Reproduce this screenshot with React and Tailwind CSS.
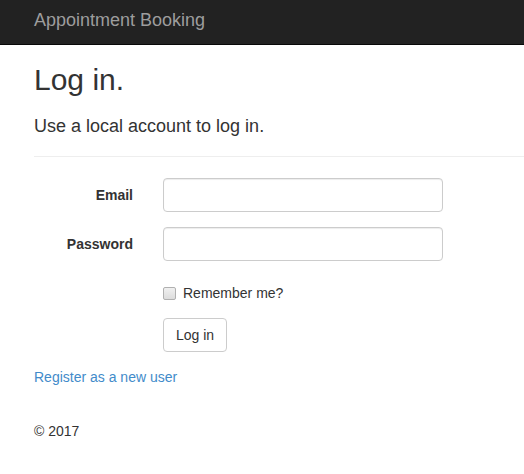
import React, { useState } from "react";

// Login page: dark navbar, heading block, horizontal form, footer
export default function App() {
  const [email, setEmail] = useState("");
  const [password, setPassword] = useState("");
  const [remember, setRemember] = useState(false);

  const inputClass =
    "w-[280px] h-[34px] px-3 border border-[#ccc] rounded-[4px] bg-white text-[14px] text-[#555] shadow-[inset_0_1px_1px_rgba(0,0,0,0.075)] focus:outline-none";

  return (
    <div className="min-h-screen bg-white font-['Liberation_Sans',Arial,sans-serif] text-[14px] leading-[20px] text-[#333]">
      {/* Navbar */}
      <nav className="h-[45px] bg-[#222] border-b border-[#080808] px-[34px] pt-[10px]">
        <a href="#" className="text-[18px] leading-[20px] text-[#9d9d9d]">
          Appointment Booking
        </a>
      </nav>

      <div className="px-[34px] overflow-hidden">
        <h2 className="mt-[18px] text-[30px] leading-[33px] font-normal">Log in.</h2>
        <h4 className="mt-[20px] text-[18px] leading-[20px] font-normal">
          Use a local account to log in.
        </h4>
        <hr className="mt-[20px] mr-[-34px] border-0 border-t border-[#eee]" />

        {/* Form */}
        <form className="mt-[21px]" onSubmit={e => e.preventDefault()}>
          <div className="flex items-center">
            <label className="w-[99px] text-right font-bold">Email</label>
            <input
              type="email"
              className={`ml-[30px] ${inputClass}`}
              value={email}
              onChange={e => setEmail(e.target.value)}
            />
          </div>
          <div className="flex items-center mt-[15px]">
            <label className="w-[99px] text-right font-bold">Password</label>
            <input
              type="password"
              className={`ml-[30px] ${inputClass}`}
              value={password}
              onChange={e => setPassword(e.target.value)}
            />
          </div>
          <div className="flex items-center mt-[22px] ml-[129px] h-[20px]">
            <input
              type="checkbox"
              className="appearance-none m-0 w-[13px] h-[13px] rounded-[2px] border border-[#b0b0b0] bg-gradient-to-b from-[#f0f0f0] to-[#dcdcdc] checked:bg-[#428bca]"
              checked={remember}
              onChange={e => setRemember(e.target.checked)}
            />
            <span className="ml-[7px]">Remember me?</span>
          </div>
          <div className="mt-[15px] ml-[129px]">
            <button
              type="submit"
              className="h-[34px] px-[12px] border border-[#ccc] rounded-[4px] bg-white text-[14px] text-[#333]"
            >
              Log in
            </button>
          </div>
        </form>

        <p className="mt-[15px]">
          <a href="#" className="text-[#428bca]">Register as a new user</a>
        </p>

        {/* Footer */}
        <footer className="mt-[34px]">
          <p>© 2017</p>
        </footer>
      </div>
    </div>
  );
}
